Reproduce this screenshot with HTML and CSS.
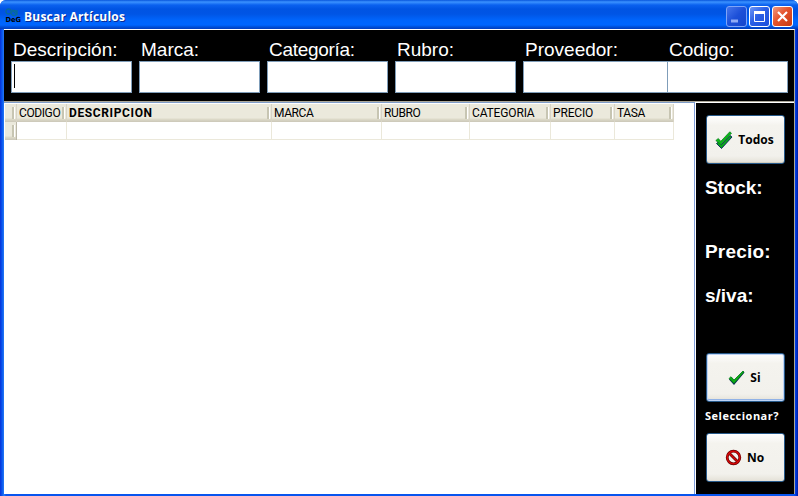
FILE: index.html
```html
<!DOCTYPE html>
<html lang="es">
<head>
<meta charset="utf-8">
<title>Buscar Artículos</title>
<link rel="stylesheet" href="styles.css">
</head>
<body>
<main class="window">
  <header class="titlebar">
    <svg class="app-icon" width="17" height="16" viewBox="0 0 17 16">
      <g fill="none" stroke="#086a9c" stroke-width="1.3"><circle cx="3.500" cy="3.500" r="2.5"/><circle cx="9" cy="5" r="2.5"/><path d="M7 2l5 5M12 2v5"/></g>
      <text class="logo-text" x="0.5" y="14" textLength="15.5" lengthAdjust="spacingAndGlyphs">DeG</text>
    </svg>
    <h1>Buscar Artículos</h1>
    <div class="controls">
      <span class="control minimize"><svg width="19" height="19"><path d="M4 14h7" stroke="#8fabf5" stroke-width="3"/></svg></span>
      <span class="control"><svg width="19" height="19"><path d="M4 5.5h11" stroke="#fff" stroke-width="3"/><path d="M4.500 5v9.500h10V5" stroke="#fff" fill="none"/></svg></span>
      <span class="control close"><svg width="19" height="19"><path d="M5 5l9 9M14 5l-9 9" stroke="#fff" stroke-width="2.200"/></svg></span>
    </div>
  </header>
  <div class="client">
    <form class="filters">
      <label class="field"><span>Descripción:</span><i class="box"><b class="caret"></b></i></label>
      <label class="field"><span>Marca:</span><i class="box"></i></label>
      <label class="field"><span class="tight">Categoría:</span><i class="box"></i></label>
      <label class="field"><span>Rubro:</span><i class="box"></i></label>
      <label class="field provider"><span>Proveedor:</span><i class="box"></i></label>
      <label class="field code"><span>Codigo:</span><i class="box"></i></label>
    </form>
    <div class="body">
      <section class="grid-pane">
        <div class="grid">
          <div class="head corner"></div>
          <div class="head">CODIGO</div>
          <div class="head sorted">DESCRIPCION</div>
          <div class="head">MARCA</div>
          <div class="head">RUBRO</div>
          <div class="head wide">CATEGORIA</div>
          <div class="head wide">PRECIO</div>
          <div class="head">TASA</div>
          <div class="head selector"></div>
          <div class="cell"></div><div class="cell"></div><div class="cell"></div><div class="cell"></div><div class="cell"></div><div class="cell"></div><div class="cell"></div>
        </div>
      </section>
      <aside class="side">
        <button class="btn todos" type="button">
          <svg width="18" height="20" viewBox="0 0 18 20"><path d="M1.500 13.500l2.500-2 2.500 3 8.500-9 2 1.500L6.500 18.500z" fill="#0aa51a" stroke="#07205c" stroke-width=".9"/><path d="M.8 10.500l2.500-2 2.500 2.800 9-9.500 1.700 1.400L5.800 14.500z" fill="#0cb81a" stroke="#087a1a" stroke-width=".7"/></svg>
          <span>Todos</span>
        </button>
        <p class="info stock">Stock:</p>
        <p class="info price">Precio:</p>
        <p class="info net">s/iva:</p>
        <button class="btn si" type="button">
          <svg width="17" height="16" viewBox="0 0 17 16"><path d="M1 9.500l2.500-2.500 2.500 3 9-9 1.500 1.500L6 15z" fill="#07205c"/><path d="M1 8.500l2-1.800 3 3.300 9-9 1 1L6 13.500z" fill="#0cac14" stroke="#06801a" stroke-width=".7"/></svg>
          <span>Si</span>
        </button>
        <p class="question">Seleccionar?</p>
        <button class="btn no" type="button">
          <svg width="17" height="17" viewBox="0 0 17 17"><circle cx="8.500" cy="8.500" r="6.300" fill="none" stroke="#650000" stroke-width="2.800"/><path d="M4 4l9 9" stroke="#650000" stroke-width="2.800"/><circle cx="8.500" cy="8.500" r="6.300" fill="none" stroke="#d50808" stroke-width="1.500"/><path d="M4 4l9 9" stroke="#d50808" stroke-width="1.500"/></svg>
          <span>No</span>
        </button>
      </aside>
    </div>
  </div>
</main>
</body>
</html>
```
FILE: styles.css
```css
* { box-sizing: border-box; }
body { margin: 0; overflow: hidden; background: #fff; font-family: "Liberation Sans", sans-serif; }
p, h1 { margin: 0; }
.window {
  width: 798px; height: 496px;
  display: flex; flex-direction: column;
  padding: 0 3px 2px 4px;
  background: linear-gradient(90deg, #0831d9 0, #0855ee 2px, #267af5 4px, #0855ee 6px, #0855ee 794px, #0037dd 796px, #001ea0 798px);
  border-radius: 6px 6px 0 0;
}
.titlebar {
  height: 29px; flex: none; margin: 0 -3px 0 -4px; padding: 3px 5px 0;
  display: flex; align-items: center;
  border-radius: 6px 6px 0 0;
  background: linear-gradient(#0855dc 0, #3b92ff 2px, #0a61ef 5px, #0054e3 9px, #0055e5 14px, #0064fb 20px, #0066ff 25px, #004fd8 27px, #003cbd 29px);
}
.app-icon { overflow: visible; }
.logo-text { font: 900 7px "DejaVu Sans", sans-serif; fill: #000; }
h1 {
  margin-left: 2px; flex: 1;
  font: bold 12px "Open Sans", sans-serif; letter-spacing: 0.22px;
  color: #fff; text-shadow: 1px 1px 0 #0a2a94;
}
.controls { display: flex; gap: 2px; }
.control {
  width: 21px; height: 21px; border: 1px solid #fff; border-radius: 3px;
  background: linear-gradient(135deg, #6d96f6, #2a5fe6 45%, #1c4fdc);
}
.control svg { display: block; }
.minimize { border-color: #7fa4f7; background: linear-gradient(135deg, #4676ec, #1c4fd8 50%, #1446cc); }
.close { background: linear-gradient(135deg, #f09a80, #e4532c 45%, #c93a12); }
.client {
  flex: 1; display: flex; flex-direction: column;
  border-top: 1px solid #fff; border-right: 1px solid #aca899; background: #000;
}
.filters {
  height: 71px; flex: none; display: flex; gap: 7px; padding: 9px 0 0 7px;
  font-size: 19px; line-height: 22px; color: #fff; background: #000;
}
.field { width: 121px; display: flex; flex-direction: column; }
.field span { padding-left: 2px; white-space: nowrap; }
.field .tight { letter-spacing: -0.3px; }
.provider { width: 145px; }
.code { margin-left: -8px; }
.box { height: 32px; border: 1px solid #7f9db9; background: #fff; }
.caret { display: block; width: 1px; height: 24px; margin: 2px 0 0 2px; background: #000; }
.body { flex: 1; display: flex; border-top: 1px solid #aca899; }
.grid-pane {
  width: 691px; flex: none; background: #fff;
  border-top: 1px solid #7f9dc9; border-right: 1px solid #7f9dd9;
  padding: 1px 0 0 1px;
}
.grid {
  display: grid; width: 669px;
  grid-template-columns: 12px 50px 205px 110px 88px 81px 64px 59px;
  grid-template-rows: 18px 18px;
  font: 12px "Roboto", sans-serif; letter-spacing: -0.4px; color: #000;
}
.head {
  position: relative; padding-left: 2px; line-height: 18px; white-space: nowrap;
  background: linear-gradient(#ebe9dc 0 14px, #dedbca 15px, #cbc7b8 18px);
  border-right: 1px solid #d8d4c6;
}
.head::after {
  content: ""; position: absolute; top: 3px; right: 1px;
  width: 2px; height: 12px; background: #c7c5b2; border-right: 1px solid #fff;
}
.wide { letter-spacing: -0.15px; }
.sorted { font-weight: bold; letter-spacing: 0.62px; }
.selector { border-right-color: #bbb7a8; }
.cell { border-right: 1px solid #ebe8da; border-bottom: 1px solid #ebe8da; }
.side {
  flex: 1; display: flex; flex-direction: column; align-items: flex-start;
  background: #000; border-left: 1px solid #fff; border-top: 1px solid #fff;
  padding: 12px 0 0 9px; color: #fff;
}
.btn {
  width: 79px; height: 49px; margin-left: 1px; padding: 0 2px 0 0; flex: none;
  display: flex; align-items: center; justify-content: center; gap: 5px;
  border: 1px solid #285a8a; border-radius: 3px;
  background: linear-gradient(#fff, #f4f3ee 20%, #f2f1ec 85%, #e4e1d7);
  font: bold 12px "Open Sans", sans-serif; color: #000;
}
.si { box-shadow: inset 0 0 0 1px #bed3f5, inset 0 -2px 0 #91b2e6; }
.todos { box-shadow: inset 0 -1px 0 #d2cec0; }
.info { font-size: 19px; line-height: 22px; font-weight: bold; }
.stock { margin-top: 13px; letter-spacing: -0.1px; }
.price { margin-top: 42px; letter-spacing: 0.2px; }
.net { margin-top: 22px; }
.si { margin-top: 46px; }
.question { margin-top: 5px; font: bold 11px/17px "Open Sans", sans-serif; letter-spacing: 0.5px; }
.no { margin-top: 9px; }
```
